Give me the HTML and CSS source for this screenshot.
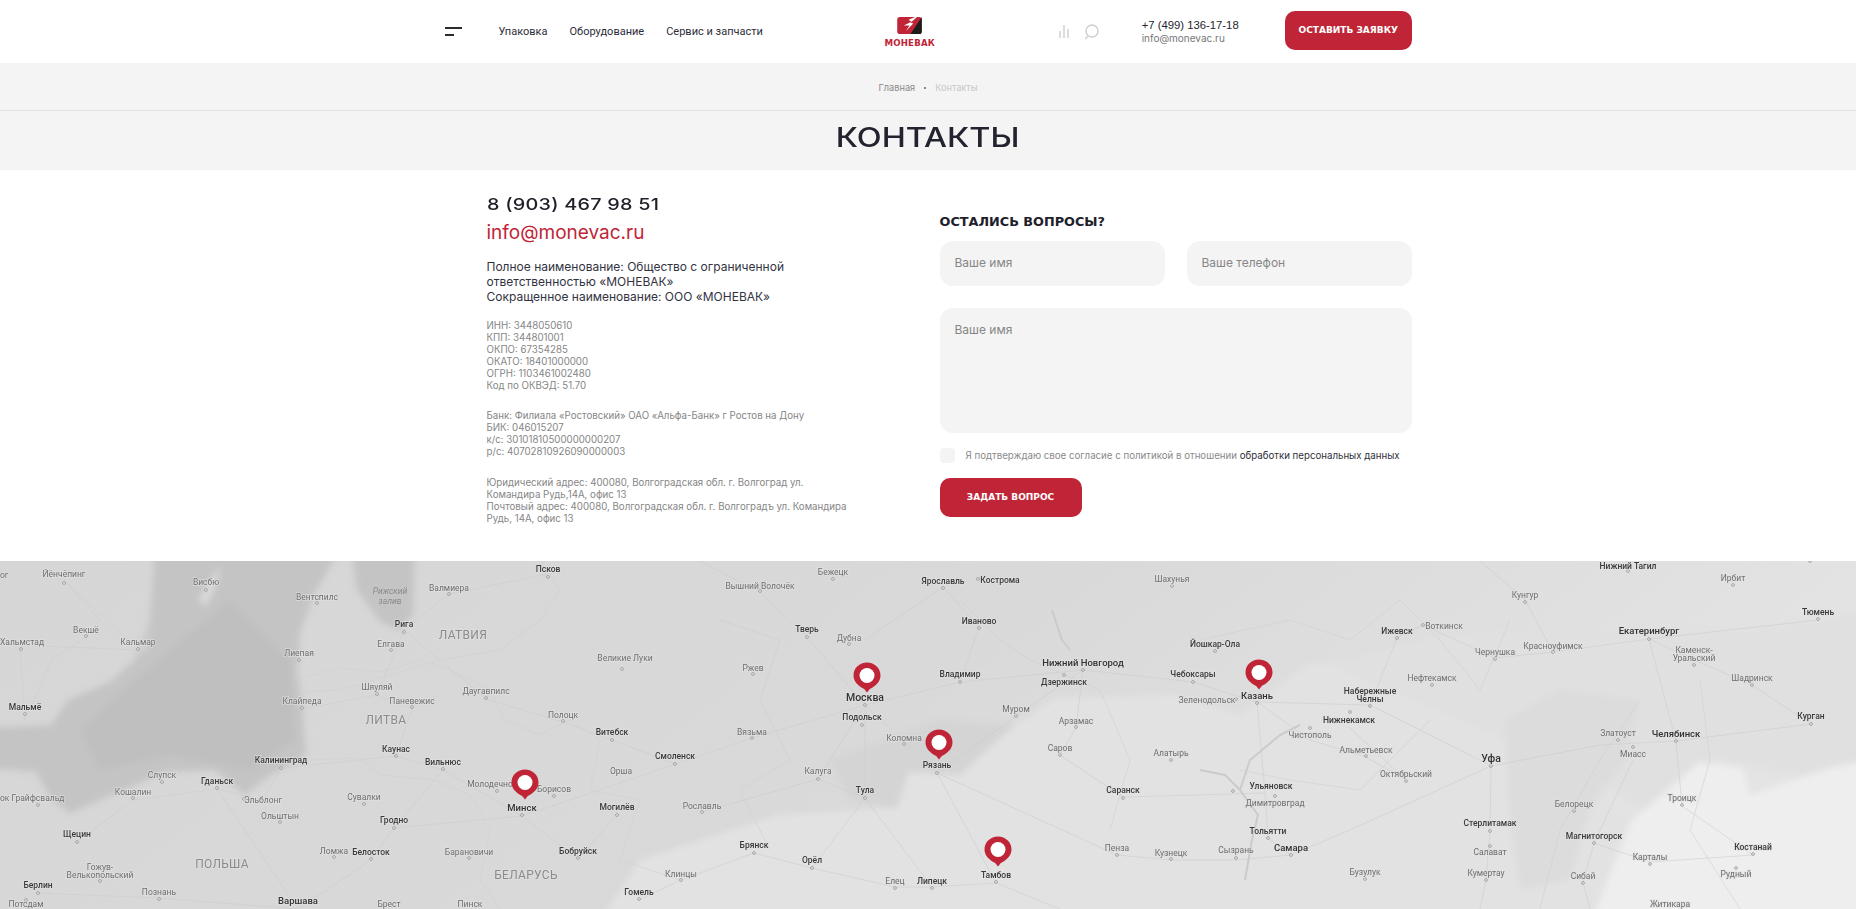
FILE: index.html
```html
<!DOCTYPE html>
<html lang="ru">
<head>
<meta charset="utf-8">
<title>Контакты — Моневак</title>
<link rel="stylesheet" href="styles.css">
</head>
<body>
<header class="top">
  <div class="wrap top-row">
    <button class="burger" aria-label="Меню"><i class="b1"></i><i class="b2"></i></button>
    <nav class="nav"><a>Упаковка</a><a>Оборудование</a><a>Сервис и запчасти</a></nav>
    <a class="logo">
      <svg class="logo-mark" width="25" height="17" viewBox="0 0 26 18"><rect x="0" y="0" width="26" height="18" rx="3" fill="#c02537"/><path d="M14 18 L26 0 L26 15 A3 3 0 0 1 23 18Z" fill="#1c1c1c"/><path d="M19 0 L12 3 L15 5 L7 9 L13 9 L9 15 L17 7 L14 6 L21 0Z" fill="#fff"/></svg>
      <span class="logo-text">МОНЕВАК</span>
    </a>
    <div class="tools">
      <svg width="10" height="13" viewBox="0 0 10 13"><path d="M1 6V13M5 0V13M9 4V13" stroke="#cfcfcf" stroke-width="1.4" fill="none"/></svg>
      <svg width="15" height="16" viewBox="0 0 15 16"><circle cx="8" cy="7" r="6" stroke="#cfcfcf" stroke-width="1.4" fill="none"/><path d="M4 12 L1 15" stroke="#cfcfcf" stroke-width="1.4"/></svg>
    </div>
    <div class="contact"><div class="tel">+7 (499) 136-17-18</div><div class="mail">info@monevac.ru</div></div>
    <a class="btn btn-top">ОСТАВИТЬ ЗАЯВКУ</a>
  </div>
</header>

<section class="crumbs"><a>Главная</a><i class="sep"></i><span>Контакты</span></section>
<section class="title-bar"><h1>КОНТАКТЫ</h1></section>

<main class="wrap content">
  <div class="info">
    <div class="big-tel">8 (903) 467 98 51</div>
    <a class="big-mail">info@monevac.ru</a>
    <p class="legal">Полное наименование: Общество с ограниченной<br>ответственностью «МОНЕВАК»<br>Сокращенное наименование: ООО «МОНЕВАК»</p>
    <p class="req r1">ИНН: 3448050610<br>КПП: 344801001<br>ОКПО: 67354285<br>ОКАТО: 18401000000<br>ОГРН: 1103461002480<br>Код по ОКВЭД: 51.70</p>
    <p class="req r2">Банк: Филиала «Ростовский» ОАО «Альфа-Банк» г Ростов на Дону<br>БИК: 046015207<br>к/с: 30101810500000000207<br>р/с: 40702810926090000003</p>
    <p class="req r2">Юридический адрес: 400080, Волгоградская обл. г. Волгоград ул.<br>Командира Рудь,14А, офис 13<br>Почтовый адрес: 400080, Волгоградская обл. г. Волгоградъ ул. Командира<br>Рудь, 14А, офис 13</p>
  </div>
  <form class="form">
    <h2>ОСТАЛИСЬ ВОПРОСЫ?</h2>
    <div class="pair"><div class="field">Ваше имя</div><div class="field">Ваше телефон</div></div>
    <div class="area">Ваше имя</div>
    <div class="agree"><i class="check"></i><span>Я подтверждаю свое согласие с политикой в отношении <a>обработки персональных данных</a></span></div>
    <a class="btn btn-form">ЗАДАТЬ ВОПРОС</a>
  </form>
</main>

<section class="map">
<svg class="map-svg" width="1856" height="348" viewBox="0 561 1856 348">
  <defs>
    <linearGradient id="land" x1="0" x2="1" y1="0" y2="0.25">
      <stop offset="0" stop-color="#d6d6d6"/><stop offset=".55" stop-color="#d9d9d9"/><stop offset="1" stop-color="#e4e4e4"/>
    </linearGradient>
    <symbol id="pin" viewBox="0 0 28 31" width="28" height="31">
      <path d="M14 0.5C21.5 0.5 27.5 6 27.5 13.5C27.5 20 22 24.500 16.800 27L14 30.500L11.200 27C6 24.500 .5 20 .5 13.500C.5 6 6.500 .5 14 .5Z" fill="#c02537"/>
      <ellipse cx="14" cy="13.500" rx="7.500" ry="7.500" fill="#fff"/>
    </symbol>
  </defs>
  <rect x="0" y="561" width="1856" height="348" fill="url(#land)"/>
  <g class="terrain">
    <path class="l1" d="M600 920L640 860L778 815L897 808L909 772L960 775L1015 725L1055 698L1174 695L1240 715L1307 665L1394 655L1505 722L1592 788L1631 822L1592 920Z"/>
    <path class="l0" d="M1330 665L1420 640L1500 630L1570 650L1650 630L1750 630L1870 610V790L1720 760L1640 810L1600 780Z"/>
    <path class="l2" d="M1592 920L1631 822L1699 762L1742 768L1750 795L1829 768L1870 760V920Z"/>
    <path class="l3" d="M1505 720L1560 690L1640 700L1625 760L1590 810L1570 880L1520 890L1510 820Z"/>
    <path class="l4" d="M940 720L1015 725L960 775L909 772L897 808L850 800L830 760Z"/>
    <path class="sea" d="M155 550L340 550L316 590L300 632L297 672L302 702L306 755L270 775L245 795L215 770L165 772L70 813L52 800L36 772L-10 768L-10 728L51 725L68 700L110 682L135 660L150 620Z"/>
    <path class="sea" d="M352 550L356 588L380 622L399 630L413 615L415 550Z"/>
    <path class="sea2" d="M170 650L230 600L290 660L295 740L250 770L170 755L100 770L80 730Z"/>
    <path class="isl" d="M198 600L210 580L222 565L214 590L206 606Z"/>
    <path class="isl" d="M140 655L146 640L152 625L146 650Z"/>
  </g>
  <path class="river" d="M1245 880L1252 840L1258 815L1240 790L1250 760L1280 735L1300 725M1240 790L1225 775L1200 770M1052 610L1062 640L1070 650"/>
  <g class="road">
    <path d="M281 768L396 756L443 770L522 816L600 790L675 764L752 738L865 705L960 682L1083 670L1193 682L1257 702L1370 705L1420 730L1491 766L1600 745L1676 741L1811 724"/>
    <path d="M404 630L486 699L563 722L612 740L675 764M865 705L807 637L760 592L700 561M865 705L865 798L812 868L754 853L681 880L639 900"/>
    <path d="M865 705L937 773L996 883L1060 909M937 773L1117 855L1171 860L1236 860L1291 855L1350 830L1491 766"/>
    <path d="M217 789L263 800L281 768M77 842L133 800L217 789L298 909M38 893L159 898L298 909M298 909L371 860L394 828L443 770M394 828L522 816L578 859L617 815"/>
    <path d="M299 660L302 709L377 695L404 630L449 594L548 574M377 695L412 709L396 756M1649 639L1818 620M1649 639L1676 741L1682 806L1753 855M1649 639L1694 660L1752 685L1811 724M1649 639L1553 652L1525 600L1480 561"/>
    <path d="M943 587L979 627L960 682M943 587L865 640M1083 670L1016 716L937 773M1083 670L1076 728L1060 755L1123 797L1265 793M1291 855L1268 838L1265 793L1257 702"/>
    <path d="M1349 727L1406 780L1366 757L1310 740L1257 702M1397 638L1370 705M1397 638L1423 625L1495 658L1553 652M1491 766L1490 830L1486 880L1480 909M1594 843L1633 760M1594 843L1583 882L1590 909M1594 843L1650 862L1753 855"/>
    <path d="M818 779L865 705M818 779L865 798M702 812L818 779M812 868L895 887L932 887L996 883M932 887L865 798"/>
    <path d="M64 580L100 620L86 637L52 660L25 720M25 720L20 645L138 650L64 580"/>
  </g>
  <g class="border">
    <path d="M300 678L340 668L380 672L420 660L445 668L490 690L505 720L540 735L570 720L600 740L590 790L640 800L620 860L680 880"/>
    <path d="M310 760L360 758L380 775L435 780L470 795L490 830L480 880L500 909M300 692L340 690L440 660L500 650L540 620L560 590L540 561"/>
    <path d="M720 620L780 640L760 700L790 760L740 790L770 850M960 600L1000 640L1030 660L1100 690L1130 760L1110 830M1200 640L1290 620L1350 640L1400 600L1440 640L1480 690L1510 620M1240 770L1290 780L1360 790L1430 720M1640 700L1600 760L1560 830L1540 909M1700 680L1710 760L1690 830L1740 909"/>
  </g>
  <g class="dots">
    <circle cx="64" cy="583"/><circle cx="206" cy="590"/><circle cx="317" cy="603"/><circle cx="449" cy="594"/><circle cx="548" cy="577"/><circle cx="86" cy="636"/><circle cx="21" cy="649"/><circle cx="138" cy="649"/><circle cx="404" cy="632"/><circle cx="391" cy="650"/><circle cx="299" cy="660"/><circle cx="377" cy="694"/><circle cx="486" cy="698"/><circle cx="302" cy="708"/><circle cx="412" cy="707"/><circle cx="25" cy="714"/><circle cx="563" cy="721"/><circle cx="612" cy="740"/><circle cx="396" cy="756"/><circle cx="281" cy="768"/><circle cx="443" cy="769"/><circle cx="162" cy="782"/><circle cx="217" cy="788"/><circle cx="497" cy="791"/><circle cx="554" cy="796"/><circle cx="133" cy="798"/><circle cx="38" cy="805"/><circle cx="244" cy="799"/><circle cx="364" cy="804"/><circle cx="522" cy="815"/><circle cx="617" cy="815"/><circle cx="280" cy="822"/><circle cx="394" cy="828"/><circle cx="77" cy="842"/><circle cx="334" cy="857"/><circle cx="371" cy="859"/><circle cx="469" cy="858"/><circle cx="578" cy="858"/><circle cx="100" cy="881"/><circle cx="38" cy="893"/><circle cx="159" cy="899"/><circle cx="26" cy="900"/>
    <circle cx="833" cy="579"/><circle cx="760" cy="591"/><circle cx="943" cy="588"/><circle cx="978" cy="579"/><circle cx="1172" cy="586"/><circle cx="979" cy="628"/><circle cx="807" cy="637"/><circle cx="849" cy="644"/><circle cx="1215" cy="651"/><circle cx="1083" cy="670"/><circle cx="1064" cy="675"/><circle cx="622" cy="669"/><circle cx="753" cy="674"/><circle cx="960" cy="682"/><circle cx="1193" cy="682"/><circle cx="865" cy="705"/><circle cx="1236" cy="699"/><circle cx="1016" cy="716"/><circle cx="862" cy="725"/><circle cx="1076" cy="727"/><circle cx="752" cy="738"/><circle cx="904" cy="744"/><circle cx="1060" cy="755"/><circle cx="1171" cy="760"/><circle cx="675" cy="764"/><circle cx="937" cy="773"/><circle cx="818" cy="779"/><circle cx="1233" cy="791"/><circle cx="865" cy="798"/><circle cx="1123" cy="798"/><circle cx="702" cy="812"/><circle cx="754" cy="853"/><circle cx="1117" cy="855"/><circle cx="1171" cy="859"/><circle cx="1236" cy="858"/><circle cx="812" cy="868"/><circle cx="681" cy="880"/><circle cx="895" cy="888"/><circle cx="932" cy="888"/><circle cx="996" cy="882"/><circle cx="639" cy="899"/>
    <circle cx="1628" cy="571"/><circle cx="1733" cy="585"/><circle cx="1525" cy="602"/><circle cx="1818" cy="619"/><circle cx="1397" cy="638"/><circle cx="1423" cy="625"/><circle cx="1649" cy="639"/><circle cx="1553" cy="652"/><circle cx="1694" cy="665"/><circle cx="1495" cy="659"/><circle cx="1432" cy="685"/><circle cx="1752" cy="685"/><circle cx="1370" cy="706"/><circle cx="1350" cy="712"/><circle cx="1257" cy="703"/><circle cx="1811" cy="724"/><circle cx="1618" cy="740"/><circle cx="1676" cy="741"/><circle cx="1310" cy="728"/><circle cx="1366" cy="756"/><circle cx="1633" cy="747"/><circle cx="1491" cy="766"/><circle cx="1406" cy="781"/><circle cx="1682" cy="805"/><circle cx="1275" cy="796"/><circle cx="1574" cy="811"/><circle cx="1490" cy="831"/><circle cx="1268" cy="838"/><circle cx="1594" cy="843"/><circle cx="1291" cy="855"/><circle cx="1753" cy="854"/><circle cx="1490" cy="846"/><circle cx="1650" cy="864"/><circle cx="1365" cy="879"/><circle cx="1486" cy="880"/><circle cx="1736" cy="868"/><circle cx="1583" cy="883"/><circle cx="1810" cy="561"/>
  </g>
  <g class="labels">
    <text class="st" x="0" y="578">ог</text><text x="64" y="577">Йёнчёпинг</text><text x="206" y="585">Висбю</text><text x="317" y="600">Вентспилс</text><text class="sea-t" x="390" y="594">Рижский</text><text class="sea-t" x="390" y="604">залив</text><text x="449" y="591">Валмиера</text><text class="b" x="548" y="572">Псков</text><text x="86" y="633">Векшё</text><text x="22" y="645">Хальмстад</text><text x="138" y="645">Кальмар</text><text class="b" x="404" y="627">Рига</text><text class="c" x="463" y="639">ЛАТВИЯ</text><text x="391" y="647">Елгава</text><text x="299" y="656">Лиепая</text><text x="625" y="661">Великие Луки</text><text x="377" y="690">Шяуляй</text><text x="486" y="694">Даугавпилс</text><text x="302" y="704">Клайпеда</text><text x="412" y="704">Паневежис</text><text class="b" x="25" y="710">Мальмё</text><text class="c" x="386" y="724">ЛИТВА</text><text x="563" y="718">Полоцк</text><text class="b" x="612" y="735">Витебск</text><text class="b" x="396" y="752">Каунас</text><text class="b" x="281" y="763">Калининград</text><text class="b" x="443" y="765">Вильнюс</text><text x="162" y="778">Слупск</text><text class="b" x="217" y="784">Гданьск</text><text x="490" y="787">Молодечно</text><text x="554" y="792">Борисов</text><text x="621" y="774">Орша</text><text x="133" y="795">Кошалин</text><text class="st" x="0" y="801">ок</text><text x="38" y="801">Грайфсвальд</text><text x="263" y="803">Эльблонг</text><text x="364" y="800">Сувалки</text><text class="m" x="522" y="811">Минск</text><text class="b" x="617" y="810">Могилёв</text><text x="280" y="819">Ольштын</text><text class="b" x="394" y="823">Гродно</text><text class="b" x="77" y="837">Щецин</text><text x="334" y="854">Ломжа</text><text class="b" x="371" y="855">Белосток</text><text x="469" y="855">Барановичи</text><text class="b" x="578" y="854">Бобруйск</text><text class="c" x="222" y="868">ПОЛЬША</text><text class="c" x="526" y="879">БЕЛАРУСЬ</text><text x="100" y="870">Гожув-</text><text x="100" y="878">Велькопольский</text><text class="b" x="38" y="888">Берлин</text><text x="159" y="895">Познань</text><text class="m" x="298" y="904">Варшава</text><text x="26" y="907">Потсдам</text><text x="389" y="907">Брест</text><text x="470" y="907">Пинск</text>
    <text x="833" y="575">Бежецк</text><text x="760" y="589">Вышний Волочёк</text><text class="b" x="943" y="584">Ярославль</text><text class="b" x="1000" y="583">Кострома</text><text x="1172" y="582">Шахунья</text><text class="b" x="979" y="624">Иваново</text><text class="b" x="807" y="632">Тверь</text><text x="849" y="641">Дубна</text><text class="b" x="1215" y="647">Йошкар-Ола</text><text class="m" x="1083" y="666">Нижний Новгород</text><text x="753" y="671">Ржев</text><text class="b" x="960" y="677">Владимир</text><text class="b" x="1193" y="677">Чебоксары</text><text class="b" x="1064" y="685">Дзержинск</text><text class="l" x="865" y="701">Москва</text><text x="1207" y="703">Зеленодольск</text><text x="1016" y="712">Муром</text><text class="b" x="862" y="720">Подольск</text><text x="1076" y="724">Арзамас</text><text x="752" y="735">Вязьма</text><text x="904" y="741">Коломна</text><text x="1060" y="751">Саров</text><text x="1171" y="756">Алатырь</text><text class="b" x="675" y="759">Смоленск</text><text class="b" x="937" y="768">Рязань</text><text x="818" y="774">Калуга</text><text class="b" x="1271" y="789">Ульяновск</text><text class="b" x="865" y="793">Тула</text><text class="b" x="1123" y="793">Саранск</text><text x="702" y="809">Рославль</text><text class="b" x="754" y="848">Брянск</text><text x="1117" y="851">Пенза</text><text x="1171" y="856">Кузнецк</text><text x="1236" y="853">Сызрань</text><text class="b" x="812" y="863">Орёл</text><text x="681" y="877">Клинцы</text><text x="895" y="884">Елец</text><text class="b" x="932" y="884">Липецк</text><text class="b" x="996" y="878">Тамбов</text><text class="b" x="639" y="895">Гомель</text>
    <text class="b" x="1628" y="569">Нижний Тагил</text><text x="1733" y="581">Ирбит</text><text x="1525" y="598">Кунгур</text><text class="b" x="1818" y="615">Тюмень</text><text class="b" x="1397" y="634">Ижевск</text><text x="1444" y="629">Воткинск</text><text class="m" x="1649" y="634">Екатеринбург</text><text x="1553" y="649">Красноуфимск</text><text x="1694" y="653">Каменск-</text><text x="1694" y="661">Уральский</text><text x="1495" y="655">Чернушка</text><text x="1432" y="681">Нефтекамск</text><text x="1752" y="681">Шадринск</text><text class="b" x="1370" y="694">Набережные</text><text class="b" x="1370" y="702">Челны</text><text class="m" x="1257" y="699">Казань</text><text class="b" x="1349" y="723">Нижнекамск</text><text class="b" x="1811" y="719">Курган</text><text x="1618" y="736">Златоуст</text><text class="m" x="1676" y="737">Челябинск</text><text x="1310" y="738">Чистополь</text><text x="1366" y="753">Альметьевск</text><text x="1633" y="757">Миасс</text><text class="l2" x="1491" y="762">Уфа</text><text x="1406" y="777">Октябрьский</text><text x="1682" y="801">Троицк</text><text x="1275" y="806">Димитровград</text><text x="1574" y="807">Белорецк</text><text class="b" x="1490" y="826">Стерлитамак</text><text class="b" x="1268" y="834">Тольятти</text><text class="b" x="1594" y="839">Магнитогорск</text><text class="m" x="1291" y="851">Самара</text><text class="b" x="1753" y="850">Костанай</text><text x="1490" y="855">Салават</text><text x="1650" y="860">Карталы</text><text x="1365" y="875">Бузулук</text><text x="1486" y="876">Кумертау</text><text x="1736" y="877">Рудный</text><text x="1583" y="879">Сибай</text><text x="1670" y="907">Житикара</text>
  </g>
  <use href="#pin" x="511" y="769"/><use href="#pin" x="853" y="662"/><use href="#pin" x="925" y="729"/><use href="#pin" x="984" y="836"/><use href="#pin" x="1245" y="659"/>
</svg>
</section>
</body>
</html>
```
FILE: styles.css
```css
* { box-sizing: border-box; }
html, body { margin: 0; padding: 0; }
body { width: 1856px; height: 909px; overflow: hidden; background: #fff; color: #25252f; font-family: "Inter", "Liberation Sans", sans-serif; }
p, h1, h2 { margin: 0; font-weight: normal; }
i { display: block; }
.wrap { width: 967px; margin: 0 auto; }

.top { height: 63px; background: #fff; }
.top-row { display: flex; align-items: center; height: 63px; }
.burger { width: 17px; height: 9px; padding: 0; border: 0; background: none; margin: -1px 37px 0 0; display: flex; flex-direction: column; justify-content: space-between; }
.b1 { width: 17px; height: 2px; background: #2b2b2f; }
.b2 { width: 9px; height: 2px; background: #2b2b2f; }
.nav { display: flex; gap: 22px; font: 11px/16px Roboto, sans-serif; color: #2d2d3a; width: 387px; }
.logo { display: flex; flex-direction: column; align-items: center; width: 52px; margin-top: 2px; }
.logo-mark { display: block; }
.logo-text { font: bold 8.600px/10px "DejaVu Sans", sans-serif; color: #c02537; letter-spacing: .2px; margin-top: 4px; white-space: nowrap; }
.tools { display: flex; align-items: center; gap: 15px; margin-left: 123px; }
.contact { margin-left: 43px; width: 144px; }
.tel { font: 11.300px/15px "Liberation Sans", sans-serif; color: #25252f; }
.mail { font: 10px/13px "Inter", sans-serif; color: #777; margin-top: -1px; }
.btn { display: flex; align-items: center; justify-content: center; height: 39px; border-radius: 10px; background: #c02537; color: #fff; font: bold 9px/1 "DejaVu Sans", sans-serif; white-space: nowrap; }
.btn-top { width: 127px; margin-top: -3px; }

.crumbs { height: 48px; background: #f4f4f4; border-bottom: 1px solid #e2e2e2; display: flex; align-items: center; justify-content: center; font: 9.200px/12px "Inter", sans-serif; color: #8a8a8a; padding-top: 3px; }
.sep { width: 2px; height: 2px; background: #888; margin: 0 9px; }
.crumbs span { color: #c8c8c8; }
.title-bar { height: 59px; background: #f4f4f4; text-align: center; }
.title-bar h1 { display: inline-block; font: 500 27px/53px "Inter", sans-serif; color: #232330; transform: scaleX(1.2); }

.content { display: flex; height: 391px; }
.info { width: 495px; padding: 24px 0 0 42px; }
.big-tel { font: 500 16.500px/20px "Inter", sans-serif; color: #1f1f29; white-space: nowrap; transform: scaleX(1.2); transform-origin: left; letter-spacing: .2px; }
.big-mail { display: block; margin-top: 6px; font: 19px/26px "Inter", sans-serif; color: #c02537; }
.legal { margin-top: 13px; font: 12px/15px "Inter", sans-serif; color: #33333f; white-space: nowrap; }
.req { font: 9.700px/12.100px "Inter", sans-serif; color: #868686; white-space: nowrap; }
.r1 { margin-top: 16px; }
.r2 { margin-top: 17px; }
.r2 + .r2 { margin-top: 19px; }

.form { width: 472px; padding-top: 44px; }
.form h2 { font: bold 12.800px/16px "DejaVu Sans", sans-serif; color: #20202a; margin-bottom: 11px; white-space: nowrap; }
.pair { display: flex; justify-content: space-between; }
.field { width: 225px; height: 45px; border-radius: 13px; background: #f4f4f4; padding: 0 15px; font: 12px/44px "Inter", sans-serif; color: #868686; }
.area { height: 125px; margin-top: 22px; border-radius: 13px; background: #f4f4f4; padding: 14px 15px; font: 12px/16px "Inter", sans-serif; color: #868686; }
.agree { display: flex; align-items: center; margin-top: 15px; height: 15px; font: 9.700px/15px "Inter", sans-serif; color: #8a8a8a; white-space: nowrap; }
.agree a { color: #30303a; }
.check { flex: none; width: 15px; height: 15px; border-radius: 4px; background: #f4f4f4; margin-right: 11px; }
.btn-form { width: 142px; margin-top: 15px; }

.map { height: 348px; overflow: hidden; }
.map-svg { display: block; }
.terrain { filter: blur(3px); }
.l0 { fill: #e0e0e0; }
.l1 { fill: #e2e2e2; }
.l2 { fill: #eeeeee; }
.l3 { fill: #dcdcdc; }
.l4 { fill: #d4d4d4; }
.sea { fill: #c4c4c4; }
.sea2 { fill: #bfbfbf; }
.isl { fill: #dadada; }
.river { fill: none; stroke: #cbcbcb; stroke-width: 2px; }
.road path { fill: none; stroke: #cccccc; stroke-width: .6px; }
.border path { fill: none; stroke: #d0d0d0; stroke-width: .6px; }
.dots circle { r: 1.400px; fill: #ececec; stroke: #777; stroke-width: .6px; }
.labels { filter: blur(.25px); }
.labels text { font: 8.500px Roboto, sans-serif; fill: #6e6e6e; text-anchor: middle; paint-order: stroke; stroke: rgba(226,226,226,.75); stroke-width: 1.500px; }
.labels .st { text-anchor: start; }
.labels .b { font-weight: 500; fill: #3a3a3a; }
.labels .m { font-size: 9.500px; font-weight: 500; fill: #333; }
.labels .l { font-size: 10.500px; font-weight: 500; fill: #333; }
.labels .l2 { font-size: 10.500px; font-weight: 500; fill: #333; }
.labels .c { font-size: 12px; letter-spacing: .3px; fill: #8a8a8a; }
.labels .sea-t { font-style: italic; fill: #8b8b8b; stroke: none; }
```
